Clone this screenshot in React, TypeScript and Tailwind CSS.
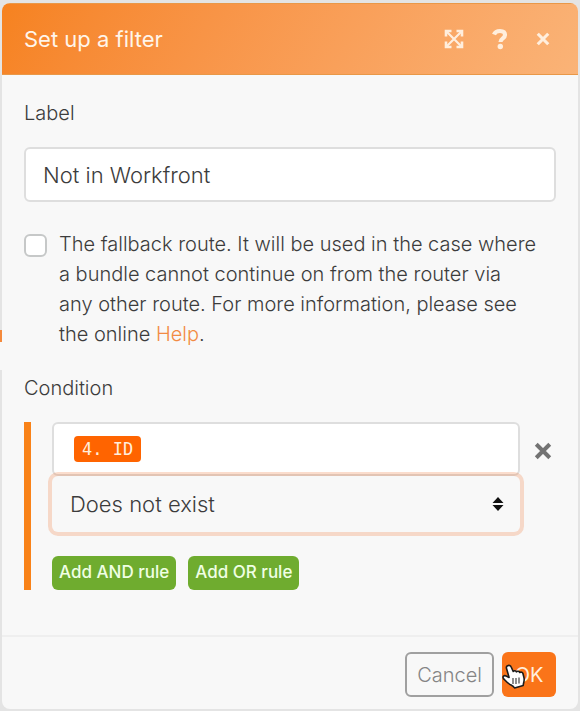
import React, { useState } from 'react';

const ExpandIcon = () => (
  <svg viewBox="0 0 20 20" className="h-5 w-5" fill="none" stroke="currentColor">
    <path d="M3 3l14 14M17 3L3 17" strokeWidth="2.200" />
    <path d="M2 7.500V2h5.500M12.500 2H18v5.500M18 12.500V18h-5.500M7.500 18H2v-5.500" strokeWidth="2.600" />
  </svg>
);

const HelpIcon = () => (
  <svg viewBox="0 0 16 22" className="h-[22px] w-4" fill="none" stroke="currentColor" strokeWidth="4.200">
    <path d="M2 6.500C3 4 5 3 8 3c3.300 0 5 1.500 5 4 0 3.500-4.500 3.200-4.500 7" />
    <circle cx="8.300" cy="18.500" r="2.700" fill="currentColor" stroke="none" />
  </svg>
);

const CloseIcon = ({ className }: { className: string }) => (
  <svg viewBox="0 0 16 16" className={className} fill="none" stroke="currentColor" strokeWidth="3.600">
    <path d="M2 2l12 12M14 2L2 14" />
  </svg>
);

const SortIcon = () => (
  <svg viewBox="0 0 12 16" className="pointer-events-none absolute top-5 right-4 h-4 w-3" fill="#111">
    <path d="M6 1l5.500 6H.5zM6 15l5.500-6H.5z" />
  </svg>
);

const HandPointer = () => (
  <svg viewBox="0 0 24 26" className="pointer-events-none absolute top-3 left-0 h-[26px] w-6">
    <path
      d="M5.500 1.800C7 .8 8.600 1.500 9.200 3l2 4.500c.9-1 2.600-.9 3.200.3 1-.9 2.700-.6 3.300.7 1.300-.8 3-.2 3.300 1.300l1 4c.7 3.200-.6 4.700-.8 7.700l-8.600 2.500c-1-2-2.800-2.600-4.800-3.600-2.500-1.300-4.300-3.800-6.300-5.800-1.300-2 .6-3.600 2.600-2.600l3 1.500L4.600 4.700c-.5-1.300 0-2.400.9-2.900z"
      fill="#fff"
      stroke="#1c1c1c"
      strokeWidth="1.600"
      strokeLinejoin="round"
    />
    <path d="M11 14v6M14 14v6M17 13.500v6" stroke="#444" strokeWidth="1.200" />
  </svg>
);

const App: React.FC = () => {
  const [label, setLabel] = useState('Not in Workfront');
  const [fallback, setFallback] = useState(false);
  const [operator, setOperator] = useState('not-exist');

  return (
    <div className="relative min-h-screen bg-[#e4e4e4] pt-[3px] pr-[2px] pb-[3px] pl-[2px] font-['Inter',sans-serif] text-[#3c3c3c]">
      {/* Canvas connector behind the dialog */}
      <div className="absolute top-[330px] left-0 h-10 w-[2px] bg-[#f8f8f8]">
        <div className="h-3 w-[2px] bg-[#f58a3c]" />
      </div>

      <div className="overflow-hidden rounded-lg bg-[#f8f8f8]">
        <header className="flex h-[72px] items-center justify-between border-y border-[#e99848] bg-linear-120 from-[#f6821f] to-[#fab377] px-[22px]">
          <h1 className="text-[22px] text-[#fff5ea]">Set up a filter</h1>
          <div className="flex items-center gap-7 pr-1.5 text-[#ffeedd]">
            <button type="button" aria-label="Expand"><ExpandIcon /></button>
            <button type="button" aria-label="Help"><HelpIcon /></button>
            <button type="button" aria-label="Close"><CloseIcon className="h-[14px] w-[14px]" /></button>
          </div>
        </header>

        <main className="px-[22px] pt-6 pb-[45px] text-[20px]">
          <label htmlFor="filter-label" className="mb-5 block leading-7 font-light">Label</label>
          <input
            id="filter-label"
            type="text"
            value={label}
            onChange={(e) => setLabel(e.target.value)}
            className="block h-[55px] w-full rounded-md border-2 border-[#dedede] bg-white px-[17px] text-[22px] font-[350] outline-none"
          />

          <div className="mt-[27px] flex items-start gap-3">
            <input
              id="fallback"
              type="checkbox"
              checked={fallback}
              onChange={(e) => setFallback(e.target.checked)}
              className="mt-[5px] h-[23px] w-[23px] shrink-0 appearance-none rounded-md border-2 border-[#c6c8c8] bg-white checked:bg-[#f6821f]"
            />
            <label htmlFor="fallback" className="pr-4 leading-[30px] font-light">
              The fallback route. It will be used in the case where a bundle cannot continue on from the router via any
              other route. For more information, please see the online{' '}
              <a href="#help" className="text-[#f28b43]">Help</a>.
            </label>
          </div>

          <h2 className="mt-[25px] mb-5 leading-7 font-light">Condition</h2>
          <div className="flex border-l-[7px] border-[#f98218] pl-[21px]">
            <div className="min-w-0 flex-1">
              <div className="flex h-[54px] items-center rounded-md border-2 border-[#dedede] bg-white px-5">
                <span className="rounded bg-[#ff6400] px-2 font-['DejaVu_Sans_Mono',monospace] text-[17px] leading-[26px] text-[#ffeedd]">
                  4. ID
                </span>
              </div>
              <div className="relative">
                <select
                  aria-label="Operator"
                  value={operator}
                  onChange={(e) => setOperator(e.target.value)}
                  className="block h-14 w-full appearance-none rounded-md bg-[#f8f8f8] px-[18px] text-[22px] font-[350] ring-4 ring-[#f07838]/25 outline-none"
                >
                  <option value="exist">Exists</option>
                  <option value="not-exist">Does not exist</option>
                </select>
                <SortIcon />
              </div>
              <div className="mt-6 flex gap-3">
                <button type="button" className="h-[34px] rounded-md bg-[#6fac2f] px-[7px] text-[17px] font-medium whitespace-nowrap text-[#f0ffe4]">
                  Add AND rule
                </button>
                <button type="button" className="h-[34px] rounded-md bg-[#6fac2f] px-[7px] text-[17px] font-medium whitespace-nowrap text-[#f0ffe4]">
                  Add OR rule
                </button>
              </div>
            </div>
            <button type="button" aria-label="Remove rule" className="mt-5 mr-1 ml-3.5 self-start text-[#737373]">
              <CloseIcon className="h-[18px] w-[18px]" />
            </button>
          </div>
        </main>

        <footer className="flex justify-end gap-2 border-t-2 border-[#efefef] px-[22px] pt-[15px] pb-3 text-[20px]">
          <button type="button" className="h-[45px] rounded-md border-2 border-[#a0a0a0] px-[10px] font-[350] text-[#858585]">
            Cancel
          </button>
          <button type="button" className="relative h-[45px] w-[54px] rounded-md bg-[#fa7419] text-[#ffeedd]">
            OK
            <HandPointer />
          </button>
        </footer>
      </div>
    </div>
  );
};

export default App;
